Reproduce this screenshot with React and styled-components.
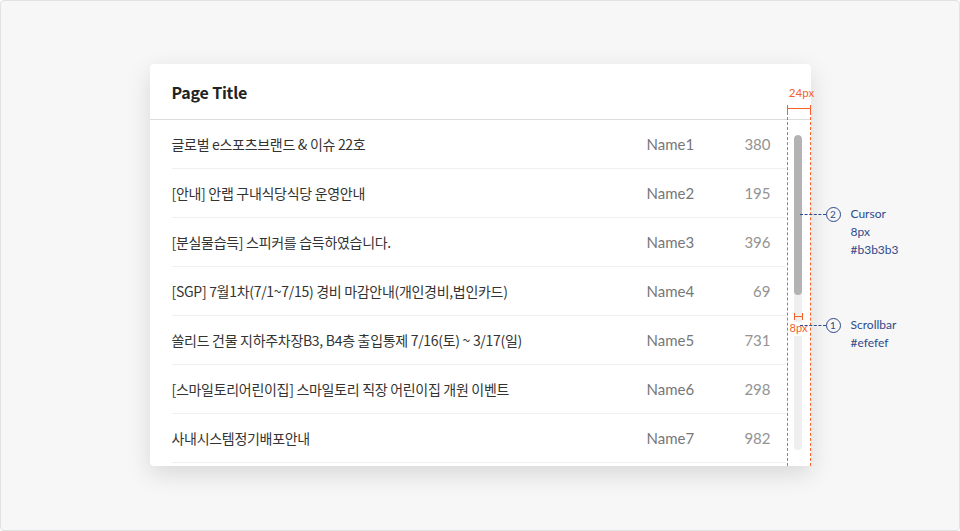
import React from 'react';
import styled, { createGlobalStyle } from 'styled-components';

const GlobalStyle = createGlobalStyle`
  html, body { margin: 0; padding: 0; }
  body {
    font-family: "Noto Sans CJK KR", "Noto Sans", sans-serif;
    background: #fff;
  }
  * { box-sizing: border-box; }
`;

const Frame = styled.div`
  width: 960px;
  height: 531px;
  background: #f7f7f7;
  border: 1px solid #e2e2e4;
  border-radius: 4px;
  display: flex;
  justify-content: center;
  padding-top: 63px;
`;

const Stage = styled.div`
  position: relative;
  width: 661px;
  height: 402px;
`;

const Card = styled.div`
  width: 100%;
  height: 100%;
  background: #fff;
  border-radius: 4px;
  box-shadow: 0 8px 24px rgba(0, 0, 0, 0.13);
  display: flex;
  flex-direction: column;
  overflow: hidden;
`;

const Header = styled.div`
  height: 56px;
  flex: none;
  display: flex;
  align-items: center;
  padding: 0 22px;
  border-bottom: 1px solid #dcdcdc;
`;

const Title = styled.h1`
  margin: 0;
  font-size: 16px;
  font-weight: 700;
  color: #222;
  letter-spacing: -0.2px;
`;

const Body = styled.div`
  flex: 1;
  display: flex;
  min-height: 0;
`;

const List = styled.ul`
  flex: 1;
  margin: 0;
  padding: 0 0 0 22px;
  list-style: none;
  overflow: hidden;
`;

const Row = styled.li`
  height: 49px;
  display: flex;
  align-items: center;
  padding-right: 15px;
  border-bottom: 1px solid #efefef;
  font-size: 14px;
`;

const Subject = styled.span`
  flex: 1;
  color: #333;
  letter-spacing: -0.3px;
`;

const Name = styled.span`
  width: 64px;
  color: #777;
  font-family: "Lato", "Noto Sans", sans-serif;
  font-size: 15px;
`;

const Count = styled.span`
  width: 60px;
  text-align: right;
  color: #939393;
  font-family: "Lato", "Noto Sans", sans-serif;
  font-size: 15px;
`;

const ScrollCol = styled.div`
  width: 25px;
  flex: none;
  display: flex;
  justify-content: center;
  padding: 15px 0 16px;
`;

const Track = styled.div`
  width: 8px;
  height: 100%;
  background: #efefef;
  border-radius: 4px;
  overflow: hidden;
`;

const Thumb = styled.div`
  width: 8px;
  height: 160px;
  background: #b3b3b3;
  border-radius: 4px;
`;

/* spec overlay */
const orange = '#f4622a';
const blue = '#2e4a8c';

const Overlay = styled.div`
  position: absolute;
  font-family: "Lato", "Noto Sans", sans-serif;
`;

const WidthSpec = styled(Overlay)`
  left: 637px;
  top: 23px;
  bottom: 0;
  width: 24px;
  display: flex;
  flex-direction: column;
  align-items: center;
  ${() => OrangeLabel} {
    height: 18px;
    font-size: 11.5px;
    margin-left: 6px;
  }
`;

const Guides = styled.div`
  flex: 1;
  align-self: stretch;
  border-left: 1px dashed ${orange};
  border-right: 1px dashed ${orange};
`;

const Tick = styled.div`
  position: relative;
  width: ${(p) => p.$w}px;
  height: 7px;
  flex: none;
  border-left: 1px solid ${orange};
  border-right: 1px solid ${orange};
  &::after {
    content: '';
    position: absolute;
    left: 0;
    right: 0;
    top: 3px;
    border-top: 1px solid ${orange};
  }
`;

const OrangeLabel = styled.div`
  color: ${orange};
  font-size: 11px;
  line-height: 12px;
  height: 14px;
`;

const GapSpec = styled(Overlay)`
  left: 637px;
  top: 249px;
  width: 24px;
  display: flex;
  flex-direction: column;
  align-items: center;
  gap: 2px;
  ${OrangeLabel} {
    background: #fff;
    padding: 0 1px;
  }
`;

const Callout = styled(Overlay)`
  left: 650px;
  top: ${(p) => p.$top}px;
  display: flex;
  align-items: flex-start;
`;

const Leader = styled.div`
  width: 26px;
  height: 8px;
  border-bottom: 1px dashed ${blue};
`;

const Badge = styled.div`
  width: 15px;
  height: 15px;
  flex: none;
  border: 1px solid ${blue};
  border-radius: 50%;
  color: ${blue};
  font-size: 10px;
  line-height: 13px;
  text-align: center;
  background: #f7f7f7;
`;

const Note = styled.div`
  margin: -2px 0 0 10px;
  color: ${blue};
  font-size: 12px;
  line-height: 18px;
`;

const rows = [
  ['글로벌 e스포츠브랜드 & 이슈 22호', 'Name1', 380],
  ['[안내] 안랩 구내식당식당 운영안내', 'Name2', 195],
  ['[분실물습득] 스피커를 습득하였습니다.', 'Name3', 396],
  ['[SGP] 7월1차(7/1~7/15) 경비 마감안내(개인경비,법인카드)', 'Name4', 69],
  ['쏠리드 건물 지하주차장B3, B4층 출입통제 7/16(토) ~ 3/17(일)', 'Name5', 731],
  ['[스마일토리어린이집] 스마일토리 직장 어린이집 개원 이벤트', 'Name6', 298],
  ['사내시스템정기배포안내', 'Name7', 982],
];

export default function App() {
  return (
    <>
      <GlobalStyle />
      <Frame>
        <Stage>
          <Card>
            <Header>
              <Title>Page Title</Title>
            </Header>
            <Body>
              <List>
                {rows.map(([s, n, c]) => (
                  <Row key={n}>
                    <Subject>{s}</Subject>
                    <Name>{n}</Name>
                    <Count>{c}</Count>
                  </Row>
                ))}
              </List>
              <ScrollCol>
                <Track>
                  <Thumb />
                </Track>
              </ScrollCol>
            </Body>
          </Card>

          <WidthSpec>
            <OrangeLabel>24px</OrangeLabel>
            <Tick $w={24} />
            <Guides />
          </WidthSpec>

          <GapSpec>
            <Tick $w={9} />
            <OrangeLabel>8px</OrangeLabel>
          </GapSpec>

          <Callout $top={143}>
            <Leader />
            <Badge>2</Badge>
            <Note>
              Cursor<br />8px<br />#b3b3b3
            </Note>
          </Callout>

          <Callout $top={254}>
            <Leader />
            <Badge>1</Badge>
            <Note>
              Scrollbar<br />#efefef
            </Note>
          </Callout>
        </Stage>
      </Frame>
    </>
  );
}
